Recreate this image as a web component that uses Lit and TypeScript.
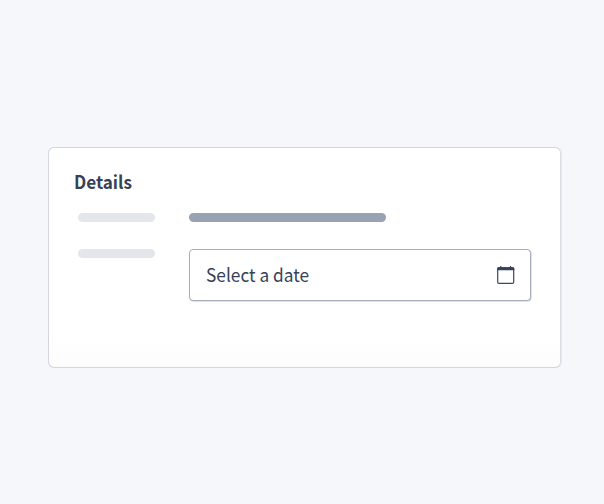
import { LitElement, html, css } from "lit";
import { customElement } from "lit/decorators.js";

@customElement("app-root")
export class AppRoot extends LitElement {
  static styles = css`
    :host {
      display: block;
      box-sizing: border-box;
      height: 504px;
      padding: 147px 43px 0 48px;
      background: #f5f7fb;
      font-family: "Noto Sans CJK SC", "Noto Sans", sans-serif;
      color: #364158;
    }
    .card {
      box-sizing: border-box;
      width: 513px;
      height: 221px;
      padding: 20px 29px 0 25px;
      border: 1px solid #d3d6e0;
      border-right-color: #dadde5;
      border-radius: 6px;
      background: linear-gradient(#fff 190px, #fdfdfd 215px);
      box-shadow: 1px 0 0 #e5e8ee;
    }
    .title {
      margin: 0;
      height: 26px;
      font-size: 18px;
      line-height: 26px;
      font-weight: 700;
      transform: scaleX(0.95);
      transform-origin: left;
    }
    .rows {
      display: grid;
      grid-template-columns: 77px 342px;
      column-gap: 34px;
      row-gap: 26.5px;
      padding: 19px 0 0 4px;
    }
    .bar {
      height: 9px;
      border-radius: 5px;
      background: #e3e7eb;
    }
    .value {
      width: 197px;
      background: #99a2b4;
    }
    .field {
      box-sizing: border-box;
      height: 52.5px;
      padding: 0 15px 0 16px;
      display: flex;
      align-items: center;
      justify-content: space-between;
      border: 1px solid #a7adbc;
      border-radius: 4px;
      background: #fff;
      box-shadow: 0.5px 0.5px 0 #c3c8d4;
      font-size: 18.5px;
      line-height: 28px;
    }
    .placeholder {
      margin-bottom: 1px;
      transform: scaleX(0.935);
      transform-origin: left;
    }
    svg {
      display: block;
    }
  `;

  render() {
    return html`
      <section class="card">
        <h2 class="title">Details</h2>
        <div class="rows">
          <div class="bar"></div>
          <div class="bar value"></div>
          <div class="bar"></div>
          <div class="field">
            <span class="placeholder">Select a date</span>
            <svg width="19" height="20" viewBox="0 0 19 20" fill="none">
              <rect x="1.7" y="2.8" width="16" height="15.6" rx="1.2" stroke="#3d485f" stroke-width="1.2" />
              <path d="M1.1 5.3V3.5Q1.1 2.2 2.4 2.2H17Q18.3 2.2 18.3 3.5V5.3Z" fill="#364158" />
              <path d="M4.8 1V3M14.5 1V3" stroke="#364158" stroke-width="1.2" />
            </svg>
          </div>
        </div>
      </section>
    `;
  }
}
